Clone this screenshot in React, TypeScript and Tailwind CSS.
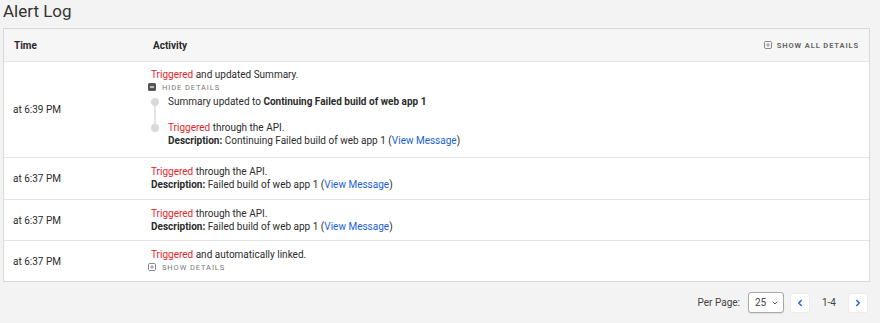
import { ChevronLeft, ChevronRight, ChevronDown } from 'lucide-react';

function BoxIcon({ minus }: { minus?: boolean }) {
  if (minus) {
    return (
      <svg width="8" height="8" viewBox="0 0 8 8" className="shrink-0">
        <rect x="0" y="0" width="8" height="8" rx="1.5" fill="#555" />
        <rect x="2" y="3.4" width="4" height="1.2" fill="#fff" />
      </svg>
    );
  }
  return (
    <svg width="8" height="8" viewBox="0 0 8 8" className="shrink-0">
      <rect x="0.5" y="0.5" width="7" height="7" rx="1.3" fill="none" stroke="#8a8a8a" />
      <path d="M2.2 4h3.6M4 2.2v3.6" stroke="#8a8a8a" strokeWidth="0.9" />
    </svg>
  );
}

const Trig = () => <span className="text-[#e3242b]">Triggered</span>;
const Link = () => <span className="text-[#1a5fd6]">View Message</span>;

function Row({ time, h, children }: { time: string; h: string; children: React.ReactNode }) {
  return (
    <div className={`flex items-center border-t border-[#e4e4e4] ${h}`}>
      <div className="w-[147px] pl-[9px] shrink-0">{time}</div>
      <div className="flex-1">{children}</div>
    </div>
  );
}

export default function App() {
  return (
    <div className="w-[880px] h-[323px] bg-[#f3f3f3] text-[#2b2b2b] text-[10px] leading-[13px] overflow-hidden" style={{ fontFamily: 'Roboto, "Liberation Sans", sans-serif' }}>
      <h1 className="text-[17px] leading-[20px] text-[#333] pl-[3px] pt-[1px] h-[28px] font-normal">Alert Log</h1>
      <div className="mx-[3px] w-[867px] border border-[#d9d9d9] bg-white">
        <div className="flex items-center h-[32px] bg-[#f6f6f6] font-bold text-[10px]">
          <div className="w-[149px] pl-[10px]">Time</div>
          <div className="flex-1">Activity</div>
          <div className="flex items-center gap-[5px] pr-[10px] text-[7.5px] tracking-[0.12em] text-[#666] font-bold">
            <BoxIcon />
            SHOW ALL DETAILS
          </div>
        </div>

        <div className="flex items-center border-t border-[#e4e4e4] h-[96px]">
          <div className="w-[147px] pl-[9px] shrink-0">at 6:39 PM</div>
          <div className="flex-1 self-start pt-[6px]">
            <div>
              <Trig /> and updated Summary.
            </div>
            <div className="flex items-center gap-[6px] -ml-[3px] h-[12px] text-[7.5px] tracking-[0.12em] text-[#777]">
              <BoxIcon minus />
              HIDE DETAILS
            </div>
            <div className="relative mt-[2px]">
              <div className="absolute left-[3px] top-[6px] w-[2px] h-[27px] bg-[#e3e3e3]" />
              <div className="flex items-center gap-[9px]">
                <div className="w-[8px] h-[8px] rounded-full bg-[#d9d9d9] relative" />
                <div>
                  Summary updated to <b className="font-bold">Continuing Failed build of web app 1</b>
                </div>
              </div>
              <div className="flex items-start gap-[9px] mt-[13px]">
                <div className="w-[8px] h-[8px] rounded-full bg-[#d9d9d9] mt-[2.5px] relative" />
                <div>
                  <div>
                    <Trig /> through the API.
                  </div>
                  <div>
                    <b className="font-bold">Description:</b> Continuing Failed build of web app 1 (<Link />)
                  </div>
                </div>
              </div>
            </div>
          </div>
        </div>

        <Row time="at 6:37 PM" h="h-[42px]">
          <div className="h-[26px] -mt-[1px]">
            <div>
              <Trig /> through the API.
            </div>
            <div>
              <b className="font-bold">Description:</b> Failed build of web app 1 (<Link />)
            </div>
          </div>
        </Row>
        <Row time="at 6:37 PM" h="h-[41px]">
          <div className="h-[26px] -mt-[1px]">
            <div>
              <Trig /> through the API.
            </div>
            <div>
              <b className="font-bold">Description:</b> Failed build of web app 1 (<Link />)
            </div>
          </div>
        </Row>
        <Row time="at 6:37 PM" h="h-[41px]">
          <div className="h-[26px]">
            <div>
              <Trig /> and automatically linked.
            </div>
            <div className="flex items-center gap-[6px] -ml-[3px] h-[12px] text-[7.5px] tracking-[0.12em] text-[#777]">
              <BoxIcon />
              SHOW DETAILS
            </div>
          </div>
        </Row>
      </div>

      <div className="flex items-center justify-end pr-[12px] mt-[10px] h-[21px]">
        <span className="text-[10px] text-[#444] mr-[8px]">Per Page:</span>
        <div className="flex items-center justify-between w-[36px] h-[21px] border border-[#a9a9a9] rounded-[3px] bg-white pl-[6px] pr-[4px] text-[10px] text-[#444] shadow-[0_1px_1px_rgba(0,0,0,0.08)]">
          25
          <ChevronDown size={8} strokeWidth={3} className="text-[#555]" />
        </div>
        <div className="ml-[6px] w-[20px] h-[20px] rounded-[3px] bg-white border border-[#ececec] flex items-center justify-center text-[#1a5fd6]">
          <ChevronLeft size={10} strokeWidth={3.5} />
        </div>
        <span className="w-[38px] text-center text-[10px] text-[#444]">1-4</span>
        <div className="w-[20px] h-[20px] rounded-[3px] bg-white border border-[#ececec] flex items-center justify-center text-[#1a5fd6]">
          <ChevronRight size={10} strokeWidth={3.5} />
        </div>
      </div>
    </div>
  );
}
